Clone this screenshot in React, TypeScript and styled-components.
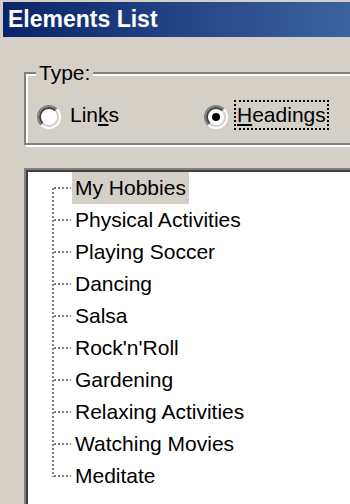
import * as React from "react";
import styled, { createGlobalStyle } from "styled-components";

const GlobalStyle = createGlobalStyle`
  html, body {
    margin: 0;
    padding: 0;
    background-color: #d4d0c8;
    overflow: hidden;
  }
  body {
    font-family: "Liberation Sans", Arial, sans-serif;
    color: #000;
  }
`;

const Window = styled.div`
  width: 350px;
  height: 504px;
  padding: 2px 0 0 3px;
  box-sizing: border-box;
  overflow: hidden;
`;

const TitleBar = styled.div`
  height: 35px;
  width: 400px;
  display: flex;
  align-items: center;
  padding-left: 5px;
  background: linear-gradient(to right, #0a246a 0px, #3d62a0 347px);
  color: #fff;
  font-weight: bold;
  font-size: 23px;
`;

const Body = styled.div`
  padding-left: 21px;
`;

const GroupBox = styled.fieldset`
  margin: 24px 0 0 0;
  width: 400px;
  padding: 14px 0 12px 10px;
  border: 2px solid #808080;
  box-shadow: 2px 2px 0 #fff, inset 2px 2px 0 #fff;
`;

const Legend = styled.legend`
  padding: 0 3px;
  font-size: 21px;
  line-height: 24px;
  background-color: #d4d0c8;
`;

const RadioRow = styled.div`
  display: grid;
  grid-template-columns: 167px auto;
  align-items: center;
  padding-left: 1px;
  height: 32px;
`;

const Option = styled.label`
  display: flex;
  align-items: center;
`;

const RadioOuter = styled.span`
  width: 24px;
  height: 24px;
  box-sizing: border-box;
  border-radius: 50%;
  border: 2px solid;
  border-color: #808080 #fff #fff #808080;
  flex: none;
  margin-top: 4px;
`;

const RadioInner = styled.span<{ $checked?: boolean }>`
  display: flex;
  align-items: center;
  justify-content: center;
  width: 100%;
  height: 100%;
  box-sizing: border-box;
  border-radius: 50%;
  border: 2px solid;
  border-color: #404040 #d4d0c8 #d4d0c8 #404040;
  background-color: #fff;

  &::after {
    content: "";
    display: ${(p) => (p.$checked ? "block" : "none")};
    width: 8px;
    height: 8px;
    border-radius: 50%;
    background-color: #000;
  }
`;

const OptionText = styled.span<{ $focused?: boolean }>`
  margin-left: 6px;
  padding: 0 1px;
  font-size: 21px;
  line-height: 26px;
  border: 2px dotted ${(p) => (p.$focused ? "#000" : "transparent")};

  u {
    text-decoration-thickness: 2px;
    text-underline-offset: 2px;
  }
`;

const TreeBox = styled.div`
  margin-top: 23px;
  width: 400px;
  height: 400px;
  border-top: 2px solid #808080;
  border-left: 2px solid #808080;
`;

const TreeInner = styled.ul`
  list-style: none;
  margin: 0;
  padding: 0;
  height: 100%;
  background-color: #fff;
  border-top: 2px solid #404040;
  border-left: 2px solid #404040;
`;

const TreeRow = styled.li`
  display: flex;
  align-items: center;
  height: 32px;
`;

const TreeLabel = styled.span<{ $selected?: boolean }>`
  padding: 0 3px;
  font-size: 21px;
  line-height: 32px;
  white-space: nowrap;
  background-color: ${(p) => (p.$selected ? "#d4d0c8" : "transparent")};
`;

type ConnectorProps = { first: boolean; last: boolean };

const Connector = ({ first, last }: ConnectorProps) => (
  <svg width="44" height="32" viewBox="0 0 44 32" style={{ flex: "none" }}>
    <line
      x1="25"
      y1={first ? 16 : 0}
      x2="25"
      y2={last ? 17 : 32}
      stroke="#808080"
      strokeWidth="2"
      strokeDasharray="2 2"
    />
    <line x1="26" y1="16" x2="43" y2="16" stroke="#808080" strokeWidth="2" strokeDasharray="2 2" />
  </svg>
);

const items = [
  "My Hobbies",
  "Physical Activities",
  "Playing Soccer",
  "Dancing",
  "Salsa",
  "Rock'n'Roll",
  "Gardening",
  "Relaxing Activities",
  "Watching Movies",
  "Meditate",
];

export default function App() {
  return (
    <>
      <GlobalStyle />
      <Window>
        <TitleBar>Elements List</TitleBar>
        <Body>
          <GroupBox>
            <Legend>Type:</Legend>
            <RadioRow>
              <Option>
                <RadioOuter>
                  <RadioInner />
                </RadioOuter>
                <OptionText>
                  Lin<u>k</u>s
                </OptionText>
              </Option>
              <Option>
                <RadioOuter>
                  <RadioInner $checked />
                </RadioOuter>
                <OptionText $focused>
                  <u>H</u>eadings
                </OptionText>
              </Option>
            </RadioRow>
          </GroupBox>
          <TreeBox>
            <TreeInner>
              {items.map((label, i) => (
                <TreeRow key={label}>
                  <Connector first={i === 0} last={i === items.length - 1} />
                  <TreeLabel $selected={i === 0}>{label}</TreeLabel>
                </TreeRow>
              ))}
            </TreeInner>
          </TreeBox>
        </Body>
      </Window>
    </>
  );
}
